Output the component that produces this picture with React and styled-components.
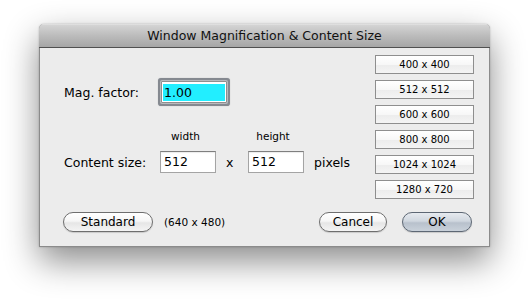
import React from "react";
import styled, { createGlobalStyle } from "styled-components";

const Global = createGlobalStyle`
  html, body { margin: 0; padding: 0; background: #ffffff; }
  body { width: 530px; height: 302px; overflow: hidden; font-family: "DejaVu Sans", "Liberation Sans", sans-serif; color: #000; }
`;

const Stage = styled.div`
  padding: 24px 0 0 39px;
`;

const Window = styled.div`
  box-sizing: border-box;
  width: 451px;
  height: 223px;
  background: #ececec;
  border: 1px solid #8b8b8b;
  border-top: none;
  border-radius: 5px 5px 0 0;
  box-shadow: 0 14px 34px rgba(0, 0, 0, 0.46), 0 0 2px rgba(0, 0, 0, 0.25);
  display: flex;
  flex-direction: column;
`;

const TitleBar = styled.div`
  height: 23px;
  margin: 0 -1px;
  border-radius: 5px 5px 0 0;
  border-bottom: 1px solid #505050;
  background: linear-gradient(#e9e9e9 0, #d4d4d4 1px, #bcbcbc 50%, #a6a6a6 100%);
  display: flex;
  align-items: center;
  justify-content: center;
  font-size: 12.5px;
  color: #111;
`;

const Body = styled.div`
  flex: 1;
  display: flex;
  flex-direction: column;
  padding: 7px 15px 0 24px;
`;

const TopRow = styled.div`
  display: flex;
  justify-content: space-between;
`;

const LeftCol = styled.div`
  display: flex;
  flex-direction: column;
`;

const MagRow = styled.div`
  margin-top: 26px;
  height: 22px;
  display: flex;
  align-items: center;
`;

const Label = styled.span`
  width: 97px;
  font-size: 12.5px;
`;

const FocusField = styled.div`
  box-sizing: border-box;
  width: 66px;
  height: 22px;
  border: 1px solid #8f8f8f;
  border-radius: 1px;
  padding: 2px 1px 1px;
  background: #fff;
  box-shadow: 0 0 0 1px #b7babe, 0 0 0 3px #858990, 0 0 1px 3px #a9acb1;
  display: flex;
`;

const Selected = styled.div`
  flex: 1;
  background: #22eeff;
  font-size: 12.5px;
  line-height: 17px;
  padding-left: 1px;
`;

const SizeLabels = styled.div`
  margin-top: 27px;
  margin-left: 96px;
  height: 12px;
  display: flex;
`;

const SmallLabel = styled.span`
  width: 56px;
  box-sizing: border-box;
  padding-right: ${(p) => p.$shift || 0}px;
  text-align: center;
  font-size: 10.5px;
  line-height: 12px;
`;

const Spacer = styled.span`
  width: ${(p) => p.$w}px;
`;

const SizeRow = styled.div`
  margin-top: 9px;
  height: 22px;
  display: flex;
  align-items: center;
`;

const SizeLabel = styled(Label)`
  width: 96px;
`;

const TextField = styled.div`
  box-sizing: border-box;
  width: 56px;
  height: 22px;
  background: #fff;
  border: 1px solid #a4a4a4;
  border-top-color: #7f7f7f;
  box-shadow: inset 0 1px 1px rgba(0, 0, 0, 0.08);
  padding-left: 3px;
  font-size: 12.5px;
  line-height: 20px;
`;

const Times = styled.span`
  width: 32px;
  box-sizing: border-box;
  padding-left: 10px;
  font-size: 12.5px;
`;

const Unit = styled.span`
  margin-left: 10px;
  font-size: 12.5px;
`;

const Presets = styled.div`
  display: flex;
  flex-direction: column;
  gap: 6px;
`;

const PresetButton = styled.div`
  box-sizing: border-box;
  width: 99px;
  height: 19px;
  border: 1px solid #8e8e8e;
  background: linear-gradient(#ffffff 0%, #f7f7f7 50%, #ececec 51%, #f4f4f4 100%);
  display: flex;
  align-items: center;
  justify-content: center;
  font-size: 10px;
`;

const Footer = styled.div`
  margin-top: 13px;
  display: flex;
  align-items: center;
  padding-right: 2px;
`;

const Pill = styled.div`
  box-sizing: border-box;
  width: ${(p) => p.$w}px;
  height: 20px;
  margin-left: ${(p) => p.$ml || 0}px;
  border-radius: 10px;
  border: 1px solid ${(p) => (p.$default ? "#5d6774" : "#6e6e6e")};
  background: ${(p) =>
    p.$default
      ? "linear-gradient(#e6eaef 0%, #d0d7df 45%, #b8c1cc 55%, #c9d1da 100%)"
      : "linear-gradient(#ffffff 0%, #f6f6f6 45%, #e6e6e6 55%, #f4f4f4 100%)"};
  box-shadow: 0 1px 1px rgba(0, 0, 0, 0.15);
  display: flex;
  align-items: center;
  justify-content: center;
  font-size: 12px;
`;

const Note = styled.span`
  margin-left: 11px;
  font-size: 10.5px;
`;

const Grow = styled.div`
  flex: 1;
`;

const presets = ["400 x 400", "512 x 512", "600 x 600", "800 x 800", "1024 x 1024", "1280 x 720"];

export default function App() {
  return (
    <>
      <Global />
      <Stage>
        <Window>
          <TitleBar>Window Magnification &amp; Content Size</TitleBar>
          <Body>
            <TopRow>
              <LeftCol>
                <MagRow>
                  <Label>Mag. factor:</Label>
                  <FocusField>
                    <Selected>1.00</Selected>
                  </FocusField>
                </MagRow>
                <SizeLabels>
                  <SmallLabel $shift={5}>width</SmallLabel>
                  <Spacer $w={32} />
                  <SmallLabel $shift={6}>height</SmallLabel>
                </SizeLabels>
                <SizeRow>
                  <SizeLabel>Content size:</SizeLabel>
                  <TextField>512</TextField>
                  <Times>x</Times>
                  <TextField>512</TextField>
                  <Unit>pixels</Unit>
                </SizeRow>
              </LeftCol>
              <Presets>
                {presets.map((p) => (
                  <PresetButton key={p}>{p}</PresetButton>
                ))}
              </Presets>
            </TopRow>
            <Footer>
              <Pill $w={90} $ml={-1}>Standard</Pill>
              <Note>(640 x 480)</Note>
              <Grow />
              <Pill $w={68}>Cancel</Pill>
              <Pill $w={70} $ml={15} $default>OK</Pill>
            </Footer>
          </Body>
        </Window>
      </Stage>
    </>
  );
}
